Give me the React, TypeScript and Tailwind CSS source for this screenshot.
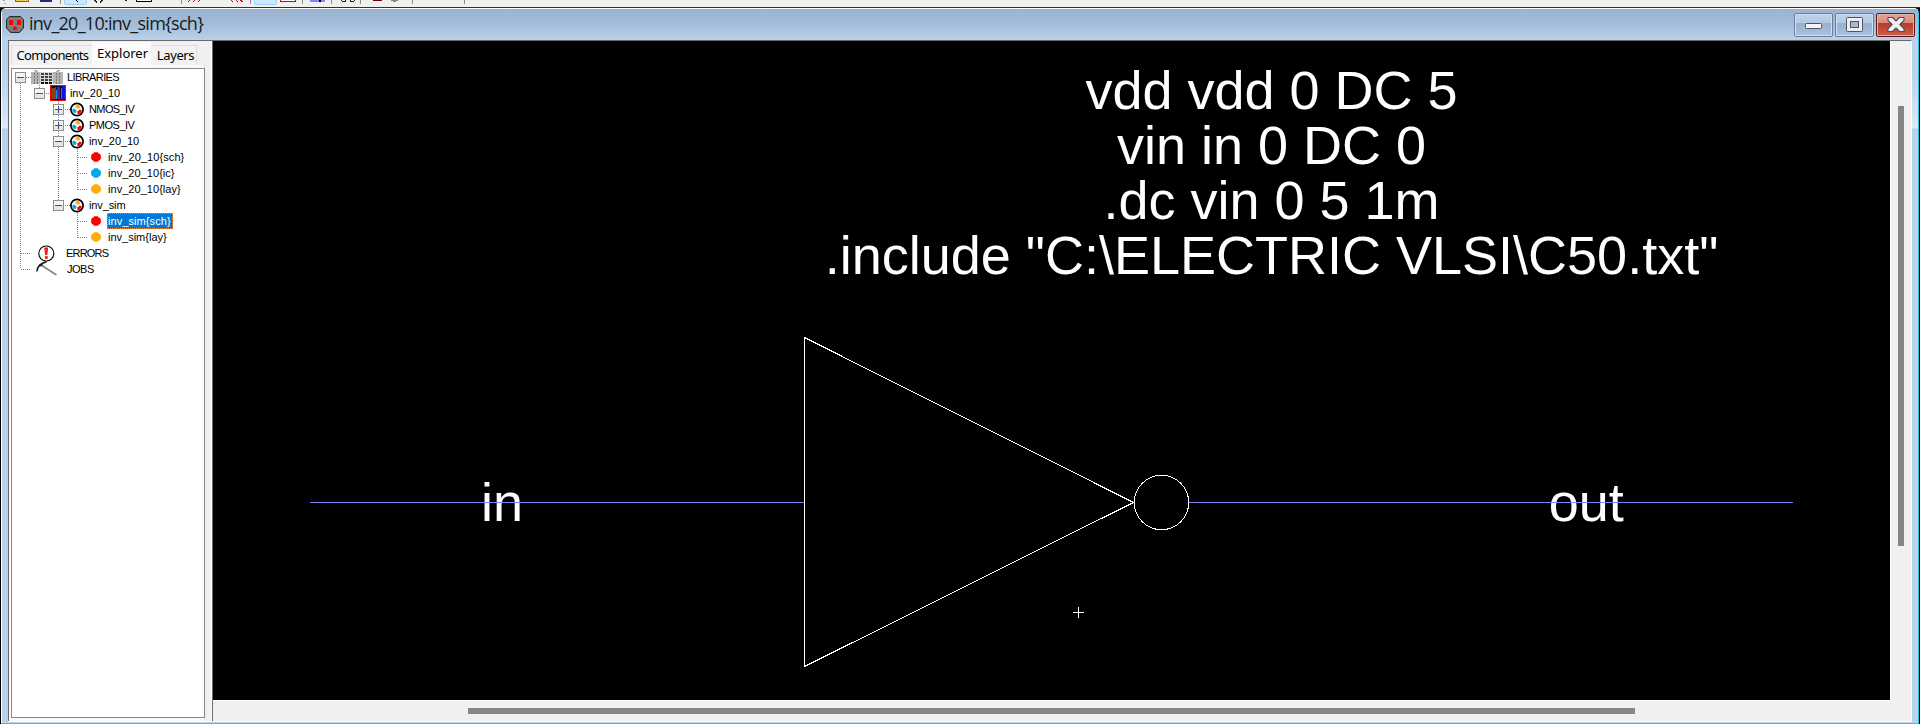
import React from "react";

function LibrariesIcon() {
  return (
    <svg width="32" height="15" viewBox="0 0 32 15" shapeRendering="crispEdges">
      <path d="M0 2H4V1H7V2H25V1H28V2H32V14H0Z" fill="#b4b4b4" />
      <rect x="9" y="2" width="13" height="12" fill="#d8d8d8" />
      <rect x="3" y="0" width="3" height="1" fill="#aaa" />
      <rect x="26" y="0" width="3" height="1" fill="#aaa" />
      {[3, 6, 9, 12].map((y) => (
        <g key={y} fill={y > 10 ? "#111" : "#444"}>
          <rect x="3" y={y} width="1" height="2" fill="#777" />
          <rect x="6" y={y} width="1" height="2" fill="#777" />
          <rect x="10" y={y} width="3" height="2" />
          <rect x="14" y={y} width="3" height="2" />
          <rect x="18" y={y} width="3" height="2" />
          <rect x="25" y={y} width="1" height="2" fill="#777" />
          <rect x="28" y={y} width="1" height="2" fill="#777" />
        </g>
      ))}
    </svg>
  );
}

function LibraryIcon() {
  return (
    <svg width="16" height="16" viewBox="0 0 16 16" shapeRendering="crispEdges">
      <rect width="16" height="16" fill="#f00" />
      <rect x="1" y="1" width="14" height="14" fill="#0a0a28" />
      <rect x="1" y="2" width="1" height="12" fill="#0b5a2a" />
      <rect x="2" y="3" width="3" height="11" fill="#7a4a10" />
      <rect x="5" y="2" width="1" height="12" fill="#0a7a20" />
      <rect x="6" y="5" width="1" height="9" fill="#00a0e8" />
      <rect x="7" y="2" width="3" height="12" fill="#7010a0" />
      <rect x="11" y="3" width="2" height="11" fill="#108030" />
      <rect x="12" y="1" width="3" height="13" fill="#1010e0" />
      <rect x="11" y="4" width="1" height="9" fill="#20a040" />
    </svg>
  );
}

function CellGroupIcon() {
  return (
    <svg width="14" height="15" viewBox="0 0 14 15">
      <circle cx="7" cy="7.5" r="6.1" fill="#fff" stroke="#000" strokeWidth="1.7" />
      <path d="M7.5 2.2L9 3.2L10.4 4.6L9 6.2L7.4 6.8L5.6 5.6L5.4 4Z" fill="#ffb000" />
      <path d="M4 6.6L5.6 7.6L6.6 9L5.8 10.8L4 11L2.3 9.4L2.4 7.6Z" fill="#00a8ec" />
      <path d="M9.6 7.6L11.4 8L11.8 9.6L10.4 11.2L8.8 12.2L7.2 11.4L7.4 9.4Z" fill="#f00" />
    </svg>
  );
}

function Dot({ color }: { color: string }) {
  return (
    <svg width="10" height="10" viewBox="0 0 10 10">
      <path d="M3.2 0.2H6.8L7.6 1.4L9 2L9.9 3.5V6.5L9 8L7.6 8.7L6.8 9.8H3.2L2.4 8.7L1 8L0.1 6.5V3.5L1 2L2.4 1.4Z" fill={color} />
    </svg>
  );
}

function ErrorIcon() {
  return (
    <svg width="17" height="17" viewBox="0 0 17 17">
      <circle cx="8.3" cy="8.5" r="7.5" fill="#fff" stroke="#000" strokeWidth="1.1" />
      <path d="M6.2 2.6H10.2L9.3 10H7.2Z" fill="#f21a10" />
      <rect x="6.8" y="11.2" width="3" height="2.6" fill="#f21a10" />
    </svg>
  );
}

function JobsIcon() {
  return (
    <svg width="22" height="16" viewBox="0 0 22 16">
      <path d="M5 4L20.5 14" stroke="#8a8a7a" strokeWidth="1.7" fill="none" />
      <path d="M0.8 10.5C1.2 6 4 2.4 10.6 0.7" stroke="#111c20" strokeWidth="1.5" fill="none" />
      <path d="M2.6 4L5.4 2.2L7 4.2L4.4 5.6Z" fill="#202020" />
    </svg>
  );
}

function Toggle({ open }: { open: boolean }) {
  return (
    <svg width="11" height="11" viewBox="0 0 11 11" shapeRendering="crispEdges">
      <rect x="0.5" y="0.5" width="10" height="10" rx="1" fill="#f6f6f6" stroke="#8e8f8f" />
      <rect x="1" y="6" width="9" height="4" fill="#e6e6e6" />
      <rect x="2" y="5" width="7" height="1" fill="#3b4f8f" />
      {!open && <rect x="5" y="2" width="1" height="7" fill="#3b4f8f" />}
    </svg>
  );
}

function TreeLines() {
  return (
    <svg className="absolute left-0 top-0" width="192" height="220" viewBox="12 69 192 220" shapeRendering="crispEdges">
      <g stroke="#808080" strokeWidth="1" strokeDasharray="1 1" fill="none">
        <path d="M20.5 83V269" />
        <path d="M26 77.5H32M21 253.5H31M21 269.5H31" />
        <path d="M39.5 85V88M46 93.5H50" />
        <path d="M58.5 101V206" />
        <path d="M65 109.5H70M65 125.5H70M65 141.5H70M65 205.5H70" />
        <path d="M77.5 149V190M78 157.5H88M78 173.5H88M78 189.5H88" />
        <path d="M77.5 213V238M78 221.5H88M78 237.5H88" />
      </g>
    </svg>
  );
}

type Node = {
  label: string;
  pad: string;
  icon: React.ReactNode;
  slot: string;
  open?: boolean;
  track?: string;
  selected?: boolean;
};

const red = "#ff0000";
const blue = "#00a8ec";
const amber = "#ffae0c";

const nodes: Node[] = [
  { label: "LIBRARIES", pad: "pl-[3px]", slot: "w-[41px] pl-[5px]", icon: <LibrariesIcon />, open: true, track: "tracking-[-0.6px]" },
  { label: "inv_20_10", pad: "pl-[22px]", slot: "w-[25px] pl-[5px]", icon: <LibraryIcon />, open: true, track: "tracking-[-0.08px]" },
  { label: "NMOS_IV", pad: "pl-[41px]", slot: "w-[25px] pl-[6px]", icon: <CellGroupIcon />, open: false, track: "tracking-[-0.6px]" },
  { label: "PMOS_IV", pad: "pl-[41px]", slot: "w-[25px] pl-[6px]", icon: <CellGroupIcon />, open: false, track: "tracking-[-0.5px]" },
  { label: "inv_20_10", pad: "pl-[41px]", slot: "w-[25px] pl-[6px]", icon: <CellGroupIcon />, open: true, track: "tracking-[-0.08px]" },
  { label: "inv_20_10{sch}", pad: "pl-[79px]", slot: "w-[17px]", icon: <Dot color={red} />, track: "tracking-[0.08px]" },
  { label: "inv_20_10{ic}", pad: "pl-[79px]", slot: "w-[17px]", icon: <Dot color={blue} />, track: "tracking-[0.04px]" },
  { label: "inv_20_10{lay}", pad: "pl-[79px]", slot: "w-[17px]", icon: <Dot color={amber} />, track: "tracking-[0.04px]" },
  { label: "inv_sim", pad: "pl-[41px]", slot: "w-[25px] pl-[6px]", icon: <CellGroupIcon />, open: true, track: "tracking-[-0.12px]" },
  { label: "inv_sim{sch}", pad: "pl-[79px]", slot: "w-[16px]", icon: <Dot color={red} />, selected: true, track: "tracking-[0.08px]" },
  { label: "inv_sim{lay}", pad: "pl-[79px]", slot: "w-[17px]", icon: <Dot color={amber} /> },
  { label: "ERRORS", pad: "pl-[26px]", slot: "w-[28px]", icon: <ErrorIcon />, track: "tracking-[-0.8px]" },
  { label: "JOBS", pad: "pl-[24px]", slot: "w-[31px]", icon: <JobsIcon />, track: "tracking-[-0.5px]" },
];

function Tree() {
  return (
    <div className="relative ml-[2px] h-[650px] w-[194px] border border-[#828790] bg-white">
      <TreeLines />
      <div className="relative flex flex-col">
        {nodes.map((n, i) => (
          <div key={i} className={`flex h-4 items-center ${n.pad}`}>
            {n.open !== undefined && <Toggle open={n.open} />}
            <span className={`flex shrink-0 items-center ${n.slot}`}>{n.icon}</span>
            <span
              className={`whitespace-pre text-[11px] leading-[14px] ${n.track ?? ""} ${
                n.selected ? "h-4 border border-dotted border-[#ff8728] bg-[#0078d7] pr-px text-white" : "text-black"
              }`}
            >
              {n.label}
            </span>
          </div>
        ))}
      </div>
    </div>
  );
}

function Sidebar() {
  return (
    <div className="flex w-[203px] flex-col border-l border-[#696969] bg-[#f0f0f0]">
      <div className="flex h-[24px] items-end pl-[2px] font-['Noto_Sans'] text-[13px] text-black">
        <div className="flex h-[20px] w-[81px] items-center justify-center border-l border-t border-[#dcdcdc] bg-[#f2f2f2] tracking-[-0.65px]">
          <span className="pl-px pt-px">Components</span>
        </div>
        <div className="flex h-[23px] w-[59px] items-center justify-center bg-[#fbfbfb] pl-[2px] tracking-[0]">Explorer</div>
        <div className="flex h-[20px] w-[46px] items-center justify-center border-r border-t border-[#dcdcdc] bg-[#f2f2f2] tracking-[-0.4px]">
          <span className="pl-[4px] pt-px">Layers</span>
        </div>
      </div>
      <div className="mr-[6px] h-[656px] border-r border-[#dcdcdc] bg-[#f9f9f9] pt-[3px]">
        <Tree />
      </div>
    </div>
  );
}

const spice = ["vdd vdd 0 DC 5", "vin in 0 DC 0", ".dc vin 0 5 1m", '.include "C:\\ELECTRIC VLSI\\C50.txt"'];

function Schematic() {
  return (
    <svg className="block bg-black" width="1677" height="659" viewBox="213 41 1677 659">
      <g fill="#fff" fontSize="54" textAnchor="middle" style={{ fontFamily: "'Liberation Sans', sans-serif" }}>
        {spice.map((line, i) => (
          <text key={line} x="1271.5" y={109 + i * 55}>
            {line}
          </text>
        ))}
        <text x="502" y="521">in</text>
        <text x="1586.3" y="521">out</text>
      </g>
      <g fill="none" stroke="#fff" strokeWidth="1" shapeRendering="crispEdges">
        <path d="M804.5 337.5V666.5L1133.5 502.5Z" />
        <circle cx="1161.5" cy="502.5" r="27.2" />
        <path d="M1073 612.5H1084M1078.5 607V618" />
      </g>
      <path d="M310 502.5H804M1189 502.5H1793" stroke="#8080ff" shapeRendering="crispEdges" />
    </svg>
  );
}

function Toolbar() {
  return (
    <svg className="block shrink-0 bg-[#f0f0f0]" width="1920" height="7" viewBox="0 0 1920 7" shapeRendering="crispEdges">
      <path d="M4 0V1M5 3V4" stroke="#a0a0a0" strokeWidth="2" />
      <rect x="15" y="0" width="14" height="2" fill="#8a6a10" />
      <rect x="16" y="0" width="12" height="1" fill="#f5c860" />
      <rect x="40" y="0" width="12" height="2" fill="#262b70" />
      <g fill="#cce8ff" stroke="#99d1ff">
        <rect x="64.5" y="-5.5" width="22" height="10" rx="2" />
        <rect x="254.5" y="-5.5" width="22" height="10" rx="2" />
      </g>
      <path d="M76 0L78 2" stroke="#000" />
      <path d="M94 0L97 2M103 0L100 2M126 0V1" stroke="#222" strokeWidth="1.5" />
      <path d="M136.5 -5V1.5H151.5V-5" stroke="#000" fill="#fff" />
      <path d="M60.5 0V4M181.5 0V4M250.5 0V4M302.5 0V4M331.5 0V4M360.5 0V4M412.5 0V4M464.5 0V4" stroke="#8c8c8c" />
      <path d="M188 2L190 0M193 2L195 0M198 2L200 0M231 0L233 2M236 0L238 2M240 0L243 2" stroke="#e00000" />
      <path d="M280.5 -5V1.5H295.5V-5" stroke="#e00000" fill="#fff" />
      <rect x="310" y="0" width="15" height="2" fill="#8484ff" />
      <rect x="319" y="0" width="2" height="2" fill="#000" />
      <path d="M341 0L343 1.5H345L346 0M350 0V1L352 2L354 1V0" stroke="#222" fill="none" />
      <rect x="373" y="0" width="9" height="1" fill="#7d0000" />
      <rect x="391" y="0" width="7" height="1" fill="#888" />
      <rect x="393" y="1" width="3" height="1" fill="#888" />
    </svg>
  );
}

function WindowButton({ kind }: { kind: "min" | "max" | "close" }) {
  const close = kind === "close";
  return (
    <div
      className={`flex h-[24px] w-[39px] items-center justify-center rounded-[2px] border ${
        close
          ? "border-[#5a1a20] bg-[linear-gradient(#e5a698_0,#d98a7c_40%,#b93a25_41%,#c85f49_100%)] shadow-[inset_0_0_0_1px_#e7b2a8]"
          : "border-[#6b7d98] bg-[linear-gradient(#bed1e6_0,#b4cae3_40%,#97b0cd_41%,#a9c2df_100%)] shadow-[inset_0_0_0_1px_#cfe0f2]"
      }`}
    >
      <svg width="20" height="18" viewBox="0 0 20 18">
        {kind === "min" && <rect x="1.5" y="7.5" width="16" height="5" rx="1" fill="#f4f4f4" stroke="#4e5468" />}
        {kind === "max" && (
          <>
            <rect x="1.5" y="1.5" width="16" height="14" rx="1" fill="#eee" stroke="#4e5468" />
            <rect x="5.5" y="5.5" width="8" height="6" fill="#a3bad5" stroke="#4e5468" />
          </>
        )}
        {close && (
          <path
            d="M2 1.500H6.500L10 5L13.500 1.500H18V4.500L13.800 8.500L18 12.500V15.500H13.500L10 12L6.500 15.500H2V12.500L6.200 8.500L2 4.500Z"
            fill="#f0f0f0"
            stroke="#514a5c"
            strokeWidth="1.1"
            strokeLinejoin="round"
          />
        )}
      </svg>
    </div>
  );
}

function TitleBar() {
  return (
    <div className="flex h-[31px] shrink-0 items-center bg-[linear-gradient(#99b4d1,#a2bbd7_45%,#b9d1ea)] pl-[4px] pr-[3px]">
      <svg width="18" height="17" viewBox="0 0 18 17">
        <path d="M3.5 0.6H14.5L17.4 3.5V12L13.5 16.4H4.5L0.6 12V3.5Z" fill="#7d7d7d" stroke="#1c1c1c" />
        <path d="M3 4H7V9H3ZM11 4H15V9H11ZM7 14V12L9 10L11 12V14Z" fill="#f00" />
      </svg>
      <h1 className="ml-[5px] flex-1 whitespace-pre pb-[2px] font-['Open_Sans'] text-[18px] leading-[29px] tracking-[-0.73px] text-[#1a1a1a]">
        inv_20_10:inv_sim&#123;sch&#125;
      </h1>
      <div className="flex gap-[2px]">
        <WindowButton kind="min" />
        <WindowButton kind="max" />
        <WindowButton kind="close" />
      </div>
    </div>
  );
}

const frame = "w-[6px] shrink-0 bg-[linear-gradient(#b9d1ea_0,#b9d1ea_30px,#dce9f7_88px,#b9d1ea_89px)]";

export default function App() {
  return (
    <div className="flex h-[724px] w-[1920px] flex-col overflow-hidden bg-black font-['Liberation_Sans']">
      <Toolbar />
      <div className="h-px shrink-0 bg-[#2d3338]" />
      <div className="flex h-[716px] shrink-0 flex-col border-l border-r border-l-black border-r-black">
        <div className="flex h-[715px] shrink-0 flex-col rounded-t-[5px] border-l border-r border-t border-l-white border-r-[#30c4e4] border-t-white">
          <TitleBar />
          <div className="flex h-[682px] shrink-0">
            <div className={frame} />
            <div className="flex h-[682px] flex-1 border-b border-r border-t border-b-white border-r-white border-t-[#696969]">
              <Sidebar />
              <div className="w-px bg-white" />
              <div className="flex flex-1 flex-col border-l border-[#696969] bg-[#f0f0f0]">
                <div className="flex h-[660px]">
                  <div className="border-b border-r border-white">
                    <Schematic />
                  </div>
                  <div className="flex-1 pl-[7px] pt-[65px]">
                    <div className="h-[440px] w-[6px] bg-[#868686]" />
                  </div>
                </div>
                <div className="pl-[255px] pt-[7px]">
                  <div className="h-[6px] w-[1167px] bg-[#868686]" />
                </div>
              </div>
            </div>
            <div className={frame} />
          </div>
          <div className="h-px shrink-0 bg-[#b9d1ea]" />
        </div>
        <div className="h-px shrink-0 bg-[#3fc3dc]" />
      </div>
    </div>
  );
}
